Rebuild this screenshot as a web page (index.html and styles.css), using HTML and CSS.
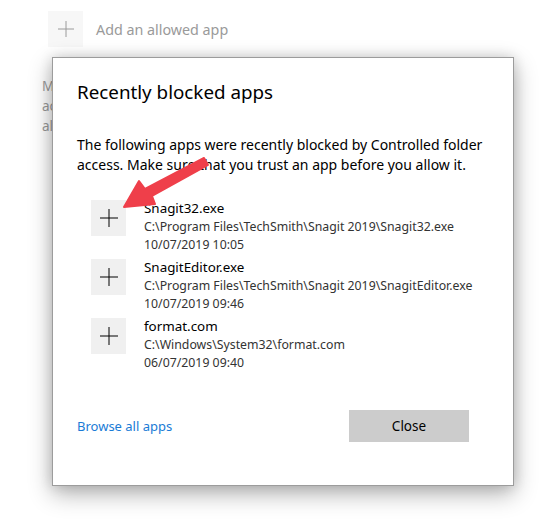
FILE: index.html
```html
<!DOCTYPE html>
<html>
<head>
<meta charset="utf-8">
<link rel="stylesheet" href="styles.css">
</head>
<body>
<div class="page">
  <div class="top-row">
    <div class="add-btn">
      <svg width="16" height="16" viewBox="0 0 16 16"><path d="M8 0V16M0 8H16" stroke="#9a9a9a" stroke-width="1" fill="none"/></svg>
    </div>
    <span class="add-label">Add an allowed app</span>
  </div>
  <p class="bg-text">Most of your apps will be allowed by Controlled folder<br>access without adding them here. Apps determined by<br>always allowed.</p>

  <div class="dialog">
    <h1 class="title">Recently blocked apps</h1>
    <p class="intro">The following apps were recently blocked by Controlled folder access. Make sure that you trust an app before you allow it.</p>
    <div class="apps">
      <div class="app">
        <div class="plus-btn"><svg width="18" height="18" viewBox="0 0 18 18"><path d="M9 0V18M0 9H18" stroke="#000" stroke-width="1" fill="none"/></svg></div>
        <div class="app-info">
          <div class="app-name">Snagit32.exe</div>
          <div class="app-meta">C:\Program Files\TechSmith\Snagit 2019\Snagit32.exe</div>
          <div class="app-meta">10/07/2019 10:05</div>
        </div>
      </div>
      <div class="app">
        <div class="plus-btn"><svg width="18" height="18" viewBox="0 0 18 18"><path d="M9 0V18M0 9H18" stroke="#000" stroke-width="1" fill="none"/></svg></div>
        <div class="app-info">
          <div class="app-name">SnagitEditor.exe</div>
          <div class="app-meta">C:\Program Files\TechSmith\Snagit 2019\SnagitEditor.exe</div>
          <div class="app-meta">10/07/2019 09:46</div>
        </div>
      </div>
      <div class="app">
        <div class="plus-btn"><svg width="18" height="18" viewBox="0 0 18 18"><path d="M9 0V18M0 9H18" stroke="#000" stroke-width="1" fill="none"/></svg></div>
        <div class="app-info">
          <div class="app-name">format.com</div>
          <div class="app-meta">C:\Windows\System32\format.com</div>
          <div class="app-meta">06/07/2019 09:40</div>
        </div>
      </div>
    </div>
    <div class="footer">
      <a class="browse" href="#">Browse all apps</a>
      <button class="close-btn">Close</button>
    </div>
  </div>

  <svg class="arrow" width="555" height="530" viewBox="0 0 555 530">
    <path d="M204 158 L208 165 L152 196 L155 204 L124 207 L139 181 L145 189 Z" fill="#ef3f4a" stroke="#ef3f4a" stroke-width="2" stroke-linejoin="round"/>
  </svg>
</div>
</body>
</html>
```
FILE: styles.css
```css
* { box-sizing: border-box; }
html, body { margin: 0; padding: 0; }
body {
  width: 555px;
  height: 530px;
  background: #ffffff;
  font-family: "Noto Sans", "Open Sans", sans-serif;
  color: #000;
  overflow: hidden;
}
.page {
  position: relative;
  width: 555px;
  height: 530px;
  padding-top: 11px;
}
.top-row {
  display: flex;
  align-items: center;
  margin-left: 48px;
  gap: 13px;
}
.add-btn {
  width: 35px;
  height: 36px;
  background: #f7f7f7;
  display: flex;
  align-items: center;
  justify-content: center;
}
.add-label {
  font-size: 14.3px;
  color: #9a9a9a;
}
.bg-text {
  margin: 29px 0 0 42px;
  width: 11px;
  overflow: hidden;
  font-size: 13.5px;
  line-height: 20px;
  color: #9a9a9a;
  white-space: nowrap;
}
.dialog {
  position: absolute;
  left: 52px;
  top: 57px;
  width: 462px;
  height: 429px;
  background: #fff;
  border: 1px solid #9c9c9c;
  box-shadow: 0 8px 22px rgba(0,0,0,0.30), 0 0 12px rgba(0,0,0,0.14);
  padding: 20px 24px 43px 24px;
  display: flex;
  flex-direction: column;
}
.title {
  margin: 0;
  font-size: 18.8px;
  font-weight: 400;
  line-height: 28px;
}
.intro {
  margin: 29px 0 0 0;
  font-size: 14px;
  line-height: 20px;
  padding-right: 6px;
}
.apps {
  margin-top: 25px;
  margin-left: 14px;
  display: flex;
  flex-direction: column;
  gap: 5px;
}
.app {
  display: flex;
  align-items: flex-start;
  gap: 18px;
}
.plus-btn {
  width: 35px;
  height: 36px;
  background: #f0f0f0;
  display: flex;
  align-items: center;
  justify-content: center;
  flex: none;
}
.app-info {
  display: flex;
  flex-direction: column;
  margin-top: -1px;
}
.app-name {
  font-size: 13.4px;
  line-height: 19px;
}
.app-meta {
  font-size: 12.3px;
  line-height: 18px;
  color: #333;
}
.footer {
  margin-top: auto;
  display: flex;
  align-items: center;
  justify-content: space-between;
  padding-right: 20px;
}
.browse {
  font-size: 13px;
  color: #1a7bd6;
  text-decoration: none;
}
.close-btn {
  width: 120px;
  height: 32px;
  border: none;
  background: #cccccc;
  font-family: inherit;
  font-size: 13.5px;
  color: #000;
  padding: 0;
}
.arrow {
  position: absolute;
  left: 0;
  top: 0;
  pointer-events: none;
}
```
